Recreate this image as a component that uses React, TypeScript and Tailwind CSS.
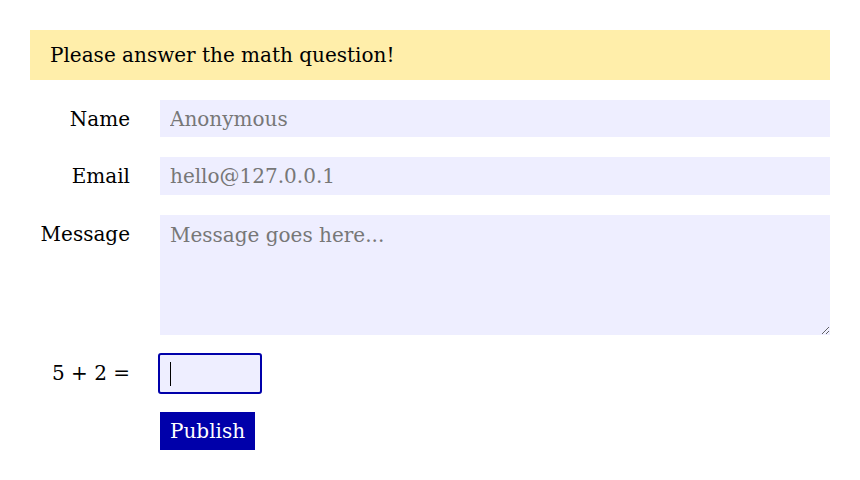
export default function App() {
  return (
    <div className="min-h-screen bg-white p-[30px] font-['DejaVu_Serif',serif] text-[20px] text-black">
      <div className="mb-5 flex h-[50px] items-center bg-[#ffeeaa] px-5">
        Please answer the math question!
      </div>

      <form className="grid grid-cols-[100px_1fr] gap-x-[30px] gap-y-5">
        <label className="flex h-[37.33px] items-center justify-end">Name</label>
        <input
          className="h-[37.33px] w-full bg-[#eeeeff] px-[10px] outline-none placeholder:text-[#777777]"
          placeholder="Anonymous"
        />

        <label className="flex h-[37.33px] items-center justify-end">Email</label>
        <input
          className="h-[37.33px] w-full bg-[#eeeeff] px-[10px] outline-none placeholder:text-[#777777]"
          placeholder="hello@127.0.0.1"
        />

        <label className="flex items-start justify-end pt-[4px]">Message</label>
        <textarea
          className="block h-[120px] w-full bg-[#eeeeff] px-[10px] py-[5px] outline-none placeholder:text-[#777777]"
          placeholder="Message goes here..."
        />

        <label className="flex h-[37.33px] items-center justify-end">5 + 2 =</label>
        <div className="relative w-[100px]">
          <input
            readOnly
            className="h-[37.33px] w-[100px] rounded-[1px] bg-[#eeeeff] px-[10px] outline-2 outline-offset-0 outline-[#0000aa]"
          />
          <span className="absolute left-[10px] top-[7px] h-[24px] w-px bg-black" />
        </div>

        <div />
        <div>
          <button
            type="button"
            className="h-[38px] bg-[#0000aa] px-[10px] text-white"
          >
            Publish
          </button>
        </div>
      </form>
    </div>
  );
}
